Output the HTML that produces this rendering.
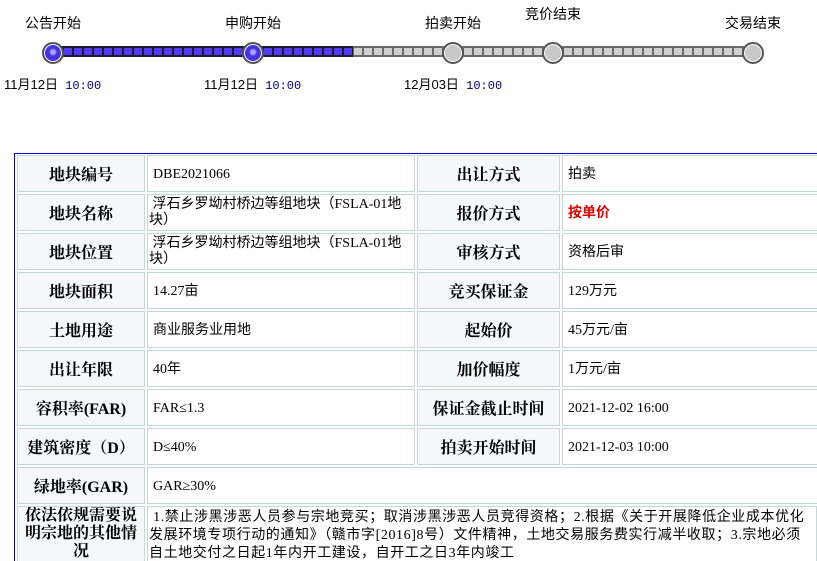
<!DOCTYPE html>
<html style="height:561px;overflow:hidden"><head><meta charset="utf-8"><style>
body{margin:0;width:817px;height:561px;overflow:hidden;background:#fff;position:relative;font-family:"Liberation Serif","SimSun","Noto Sans CJK SC",serif;}
.a{position:absolute}
.t{font-family:"Liberation Sans","Noto Sans CJK SC",sans-serif;font-size:14px;color:#000;white-space:nowrap;transform:translateX(-50%)}
.d{font-family:"Liberation Sans","Noto Sans CJK SC",sans-serif;font-size:13px;color:#000;white-space:nowrap}
.d b{font-weight:normal;font-family:"Liberation Mono",monospace;color:#000080;font-size:12px}
.c{position:absolute;box-sizing:border-box;border:1px solid #c3d9d9;height:37px;display:flex;align-items:center;font-size:14px;overflow:hidden}
.l{background:#f4f8f9;justify-content:center;font-weight:bold;font-size:16px;font-family:"Liberation Serif","Noto Serif CJK SC","Noto Sans CJK SC",serif}
.v{padding-left:5px;padding-top:2px;font-family:"Liberation Serif","Noto Sans CJK SC",serif;line-height:16px}
.n{width:18px;height:18px;border-radius:50%;border:2px solid #555;box-shadow:0 0 0 1px #fff inset;background:#c8c8c8;top:42px;transform:translateX(-50%)}
.n.b{background:radial-gradient(circle at 50% 45%,#b0a8ff 0 2px,#4433e0 4px)}
</style></head><body>
<div class="a" style="left:53px;top:46px;width:300px;height:11px;background:#1a1a30;"><div style="margin:2px 1px;height:7px;background:repeating-linear-gradient(90deg,#4f3bf0 0 8px,#1a1a30 8px 10px)"></div></div>
<div class="a" style="left:353px;top:46px;width:400px;height:11px;background:#6a6a6a;"><div style="margin:2px 1px;height:7px;background:repeating-linear-gradient(90deg,#cfcfcf 0 8px,#6a6a6a 8px 10px)"></div></div>
<div class="a n b" style="left:53px"></div>
<div class="a n b" style="left:253px"></div>
<div class="a n" style="left:453px"></div>
<div class="a n" style="left:553px"></div>
<div class="a n" style="left:753px"></div>
<div class="a t" style="left:53px;top:13px">公告开始</div>
<div class="a t" style="left:253px;top:13px">申购开始</div>
<div class="a t" style="left:453px;top:13px">拍卖开始</div>
<div class="a t" style="left:553px;top:4px">竞价结束</div>
<div class="a t" style="left:753px;top:13px">交易结束</div>
<div class="a d" style="left:4px;top:74px">11月12日&nbsp; <b>10:00</b></div>
<div class="a d" style="left:204px;top:74px">11月12日&nbsp; <b>10:00</b></div>
<div class="a d" style="left:404px;top:74px">12月03日&nbsp; <b>10:00</b></div>
<div class="a" style="left:14px;top:153px;width:810px;height:420px;border:1px solid #0000ff;box-sizing:border-box"></div>

<div class="c l" style="left:17px;top:155px;width:128px">地块编号</div><div class="c v" style="left:147px;top:155px;width:268px">DBE2021066</div><div class="c l" style="left:417px;top:155px;width:143px">出让方式</div><div class="c v" style="left:562px;top:155px;width:260px">拍卖</div>
<div class="c l" style="left:17px;top:194px;width:128px">地块名称</div><div class="c v" style="left:147px;top:194px;width:268px;padding-left:1px;padding-top:0;white-space:normal">&nbsp;浮石乡罗坳村桥边等组地块（FSLA-01地块）</div><div class="c l" style="left:417px;top:194px;width:143px">报价方式</div><div class="c v" style="left:562px;top:194px;width:260px;color:#e00000;font-weight:bold">按单价</div>
<div class="c l" style="left:17px;top:233px;width:128px">地块位置</div><div class="c v" style="left:147px;top:233px;width:268px;padding-left:1px;padding-top:0;white-space:normal">&nbsp;浮石乡罗坳村桥边等组地块（FSLA-01地块）</div><div class="c l" style="left:417px;top:233px;width:143px">审核方式</div><div class="c v" style="left:562px;top:233px;width:260px">资格后审</div>
<div class="c l" style="left:17px;top:272px;width:128px">地块面积</div><div class="c v" style="left:147px;top:272px;width:268px">14.27亩</div><div class="c l" style="left:417px;top:272px;width:143px">竞买保证金</div><div class="c v" style="left:562px;top:272px;width:260px">129万元</div>
<div class="c l" style="left:17px;top:311px;width:128px">土地用途</div><div class="c v" style="left:147px;top:311px;width:268px">商业服务业用地</div><div class="c l" style="left:417px;top:311px;width:143px">起始价</div><div class="c v" style="left:562px;top:311px;width:260px">45万元/亩</div>
<div class="c l" style="left:17px;top:350px;width:128px">出让年限</div><div class="c v" style="left:147px;top:350px;width:268px">40年</div><div class="c l" style="left:417px;top:350px;width:143px">加价幅度</div><div class="c v" style="left:562px;top:350px;width:260px">1万元/亩</div>
<div class="c l" style="left:17px;top:389px;width:128px">容积率(FAR)</div><div class="c v" style="left:147px;top:389px;width:268px">FAR≤1.3</div><div class="c l" style="left:417px;top:389px;width:143px">保证金截止时间</div><div class="c v" style="left:562px;top:389px;width:260px">2021-12-02 16:00</div>
<div class="c l" style="left:17px;top:428px;width:128px">建筑密度（D）</div><div class="c v" style="left:147px;top:428px;width:268px">D≤40%</div><div class="c l" style="left:417px;top:428px;width:143px">拍卖开始时间</div><div class="c v" style="left:562px;top:428px;width:260px">2021-12-03 10:00</div>
<div class="c l" style="left:17px;top:467px;width:128px">绿地率(GAR)</div><div class="c v" style="left:147px;top:467px;width:675px">GAR≥30%</div>
<div class="c l" style="left:17px;top:506px;width:128px;height:60px;align-items:flex-start;text-align:center;line-height:18px;padding-top:0">依法依规需要说明宗地的其他情况</div>
<div class="c v" style="left:147px;top:506px;width:670px;height:60px;align-items:flex-start;padding-left:1px;padding-right:6px;padding-top:2px;white-space:normal;font-family:'Liberation Serif','Noto Sans CJK SC',serif;line-height:18px;letter-spacing:0.6px">&nbsp;1.禁止涉黑涉恶人员参与宗地竞买；取消涉黑涉恶人员竞得资格；2.根据《关于开展降低企业成本优化发展环境专项行动的通知》（赣市字[2016]8号）文件精神，土地交易服务费实行减半收取；3.宗地必须自土地交付之日起1年内开工建设，自开工之日3年内竣工</div>
</body></html>
